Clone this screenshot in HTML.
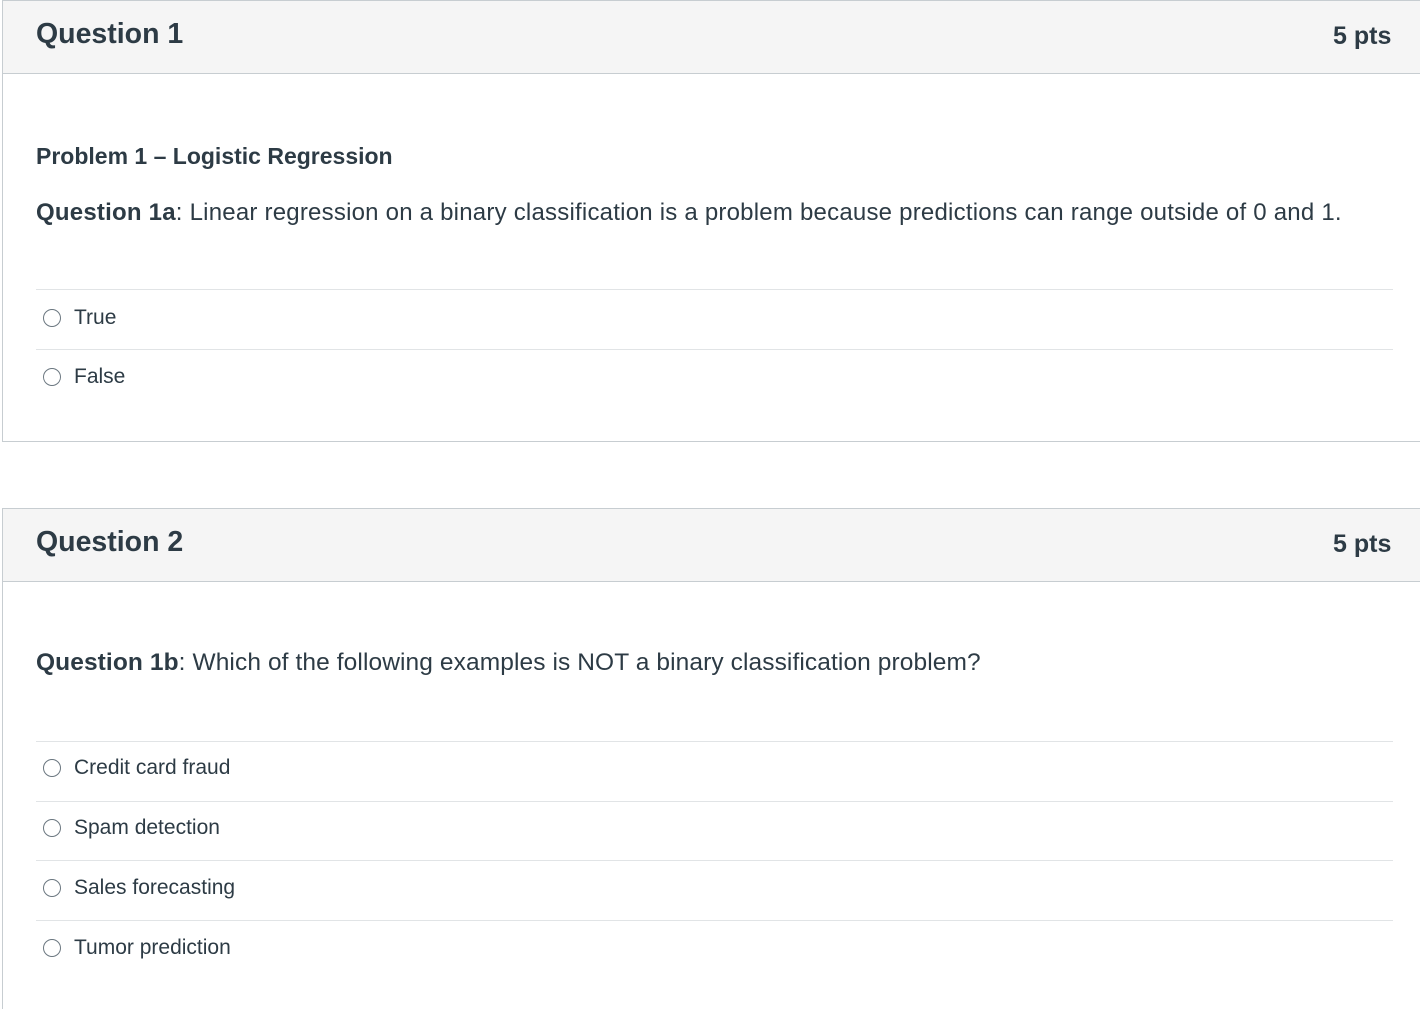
<!DOCTYPE html>
<html style="height:1009px;overflow:hidden"><head><style>
body{margin:0;background:#fff;font-family:"Liberation Sans",sans-serif;color:#2d3b45;width:1420px;height:1009px;overflow:hidden;position:relative}
.card{position:absolute;left:2px;width:1430px;border:1px solid #c7cdd1;border-right:none;box-sizing:border-box}
.hd{height:72px;background:#f5f5f5;border-bottom:1px solid #c7cdd1;position:relative}
.hd .t{position:absolute;left:33px;top:17px;font-size:28.5px;font-weight:bold}
.hd .p{position:absolute;left:1330px;top:21px;font-size:25px;font-weight:bold}
.txt{position:absolute;left:33px;font-size:24px;white-space:nowrap}
.line{position:absolute;left:33px;width:1357px;height:1px;background:#e1e4e6}
.opt{position:absolute;left:40px;font-size:21px;white-space:nowrap}
.opt i{display:inline-block;width:16px;height:16px;border:1.5px solid #6b7780;border-radius:50%;vertical-align:-3px;margin-right:13px}
</style></head><body>
<div class="card" style="top:0;height:442px">
 <div class="hd"><div class="t">Question 1</div><div class="p">5 pts</div></div>
 <div class="txt" style="top:142px;font-weight:bold;font-size:23px">Problem 1 – Logistic Regression</div>
 <div class="txt" style="top:198px;letter-spacing:0.22px"><b>Question 1a</b>: Linear regression on a binary classification is a problem because predictions can range outside of 0 and 1.</div>
 <div class="line" style="top:288px"></div>
 <div class="opt" style="top:305px"><i></i>True</div>
 <div class="line" style="top:348px"></div>
 <div class="opt" style="top:364px"><i></i>False</div>
</div>
<div class="card" style="top:508px;height:520px">
 <div class="hd"><div class="t">Question 2</div><div class="p">5 pts</div></div>
 <div class="txt" style="top:140px;font-size:24.5px;letter-spacing:0.1px"><b>Question 1b</b>: Which of the following examples is NOT a binary classification problem?</div>
 <div class="line" style="top:232px"></div>
 <div class="opt" style="top:247px"><i></i>Credit card fraud</div>
 <div class="line" style="top:292px"></div>
 <div class="opt" style="top:307px"><i></i>Spam detection</div>
 <div class="line" style="top:351px"></div>
 <div class="opt" style="top:367px"><i></i>Sales forecasting</div>
 <div class="line" style="top:411px"></div>
 <div class="opt" style="top:427px"><i></i>Tumor prediction</div>
</div>
</body></html>
